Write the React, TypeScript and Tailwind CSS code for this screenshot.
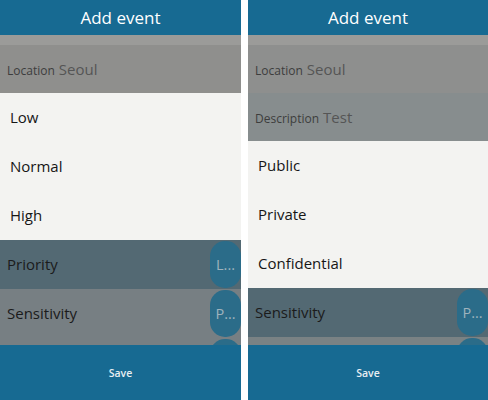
const font = { fontFamily: '"Open Sans", "Noto Sans", sans-serif' };

function Pill({ label }: { label?: string }) {
  return (
    <div className="flex h-[47px] w-[31px] shrink-0 items-center justify-center rounded-[15px] bg-[#2b6c89] text-[14.5px] text-[#9fb3bd]">
      {label}
    </div>
  );
}

function FieldRow({ label, value, className }: { label: string; value: string; className: string }) {
  return (
    <div className={`flex h-[48px] shrink-0 items-center px-[7px] ${className}`}>
      <div className="flex items-baseline">
        <span className="text-[12px] text-[#3d3d3d]">{label}</span>
        <span className="ml-[4px] text-[15px] text-[#555555]">{value}</span>
      </div>
    </div>
  );
}

function OptionList({ items }: { items: string[] }) {
  return (
    <div className="flex shrink-0 flex-col bg-[#f3f3f1]">
      {items.map((item) => (
        <div key={item} className="flex h-[49px] items-center px-[10px] text-[15px] text-[#161616]">
          {item}
        </div>
      ))}
    </div>
  );
}

function PickerRow({ label, pill, className }: { label: string; pill?: string; className: string }) {
  return (
    <div className={`flex h-[49px] shrink-0 items-center justify-between pl-[7px] ${className}`}>
      <span className="text-[15px] text-[#1b1b1b]">{label}</span>
      <Pill label={pill} />
    </div>
  );
}

function Panel({ children }: { children: React.ReactNode }) {
  return (
    <div className="flex h-[400px] flex-col overflow-hidden">
      <div className="flex h-[35px] shrink-0 items-center justify-center bg-[#176a92] text-[17px] text-white">Add event</div>
      <div className="flex min-h-0 flex-1 flex-col overflow-hidden">
        <div className="h-[10px] shrink-0 bg-[#9b9b99]" />
        {children}
      </div>
      <div className="flex h-[55px] shrink-0 items-center justify-center bg-[#176a92] pt-[2px] text-[10.5px] font-semibold text-[#e8eef2]">Save</div>
    </div>
  );
}

export default function App() {
  return (
    <div className="grid h-[400px] w-[488px] grid-cols-[241px_240px] gap-[7px] bg-white" style={font}>
      <Panel>
        <FieldRow label="Location" value="Seoul" className="bg-[#8f8f8d]" />
        <OptionList items={["Low", "Normal", "High"]} />
        <PickerRow label="Priority" pill="L..." className="bg-[#536973]" />
        <PickerRow label="Sensitivity" pill="P..." className="bg-[#777f83]" />
        <PickerRow label="" className="bg-[#777f83]" />
      </Panel>
      <Panel>
        <FieldRow label="Location" value="Seoul" className="bg-[#8e8f8e]" />
        <FieldRow label="Description" value="Test" className="bg-[#878d8e]" />
        <OptionList items={["Public", "Private", "Confidential"]} />
        <PickerRow label="Sensitivity" pill="P..." className="bg-[#536973]" />
        <PickerRow label="" className="bg-[#7a8284]" />
      </Panel>
    </div>
  );
}
